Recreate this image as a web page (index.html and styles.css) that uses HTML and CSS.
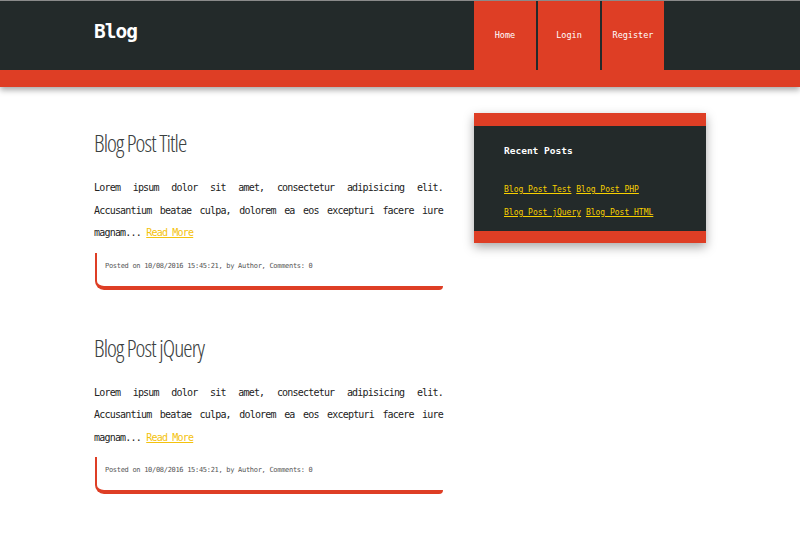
FILE: index.html
```html
<!DOCTYPE html>
<html>
<head>
<meta charset="utf-8">
<title>Blog</title>
<link rel="stylesheet" href="styles.css">
</head>
<body>
<header class="site-header">
  <div class="header-inner">
    <div class="logo">Blog</div>
    <nav class="nav">
      <a class="nav-item" href="#">Home</a>
      <a class="nav-item" href="#">Login</a>
      <a class="nav-item" href="#">Register</a>
    </nav>
  </div>
  <div class="header-band"></div>
</header>
<div class="page">
  <main class="posts">
    <article class="post">
      <h2 class="post-title">Blog Post Title</h2>
      <p class="post-body">Lorem ipsum dolor sit amet, consectetur adipisicing elit. Accusantium beatae culpa, dolorem ea eos excepturi facere iure magnam... <a class="link" href="#">Read More</a></p>
      <div class="post-meta">Posted on 10/08/2016 15:45:21, by Author, Comments: 0</div>
    </article>
    <article class="post">
      <h2 class="post-title">Blog Post jQuery</h2>
      <p class="post-body">Lorem ipsum dolor sit amet, consectetur adipisicing elit. Accusantium beatae culpa, dolorem ea eos excepturi facere iure magnam... <a class="link" href="#">Read More</a></p>
      <div class="post-meta">Posted on 10/08/2016 15:45:21, by Author, Comments: 0</div>
    </article>
  </main>
  <aside class="sidebar">
    <div class="widget">
      <h3 class="widget-title">Recent Posts</h3>
      <div class="widget-links">
        <a class="link" href="#">Blog Post Test</a> <a class="link" href="#">Blog Post PHP</a>
        <a class="link" href="#">Blog Post jQuery</a> <a class="link" href="#">Blog Post HTML</a>
      </div>
    </div>
  </aside>
</div>
</body>
</html>
```

FILE: styles.css
```css
html, body {
  margin: 0;
  padding: 0;
  background: #ffffff;
}

body {
  font-family: "DejaVu Sans Mono", "Liberation Mono", monospace;
  color: #222;
}

.site-header {
  border-top: 1px solid #8a8a8a;
  background: #232a2a;
  box-shadow: 0 3px 6px rgba(0, 0, 0, 0.35);
}

.header-inner {
  width: 612px;
  margin: 0 auto;
  display: grid;
  grid-template-columns: 349px 232px;
  column-gap: 31px;
  height: 69px;
}

.logo {
  color: #fff;
  font-weight: bold;
  font-size: 19.5px;
  letter-spacing: -1px;
  line-height: 62px;
}

.nav {
  display: flex;
  gap: 2px;
}

.nav-item {
  width: 62px;
  background: #de3e25;
  color: #fff;
  text-decoration: none;
  font-size: 8.5px;
  display: flex;
  align-items: center;
  justify-content: center;
  padding-bottom: 2px;
}

.header-band {
  height: 17px;
  background: #de3e25;
}

.page {
  width: 612px;
  margin: 0 auto;
  display: grid;
  grid-template-columns: 349px 232px;
  column-gap: 31px;
  align-items: start;
}

.posts {
  padding-top: 42px;
}

.post {
  margin-bottom: 44px;
}

.post-title {
  margin: 0 0 20px;
  font-family: "Open Sans", "Lato", sans-serif;
  font-weight: 300;
  font-stretch: condensed;
  font-size: 23.5px;
  line-height: 28px;
  color: #3a4040;
  letter-spacing: -0.9px;
}

.post-body {
  margin: 0 0 8px;
  font-size: 10px;
  letter-spacing: -0.8px;
  line-height: 22.5px;
  text-align: justify;
}

.link {
  color: #f4c20d;
}

.post-meta {
  margin-left: 1px;
  padding: 8px 8px 15px;
  border-left: 2px solid #de3e25;
  border-bottom: 4px solid #de3e25;
  border-bottom-left-radius: 9px;
  border-bottom-right-radius: 4px;
  font-size: 7px;
  letter-spacing: -0.3px;
  color: #555;
  line-height: 10px;
}

.sidebar {
  margin-top: 26px;
}

.widget {
  background: #232a2a;
  border-top: 13px solid #de3e25;
  border-bottom: 12px solid #de3e25;
  box-shadow: 0 4px 10px rgba(0, 0, 0, 0.35);
  padding: 18px 30px 7px;
}

.widget-title {
  margin: 0 0 20px;
  color: #fff;
  font-size: 9.5px;
  font-weight: bold;
  line-height: 14px;
}

.widget-links {
  font-size: 8px;
  line-height: 23px;
}

.widget-links .link {
  color: #f7d000;
  white-space: nowrap;
}
```
